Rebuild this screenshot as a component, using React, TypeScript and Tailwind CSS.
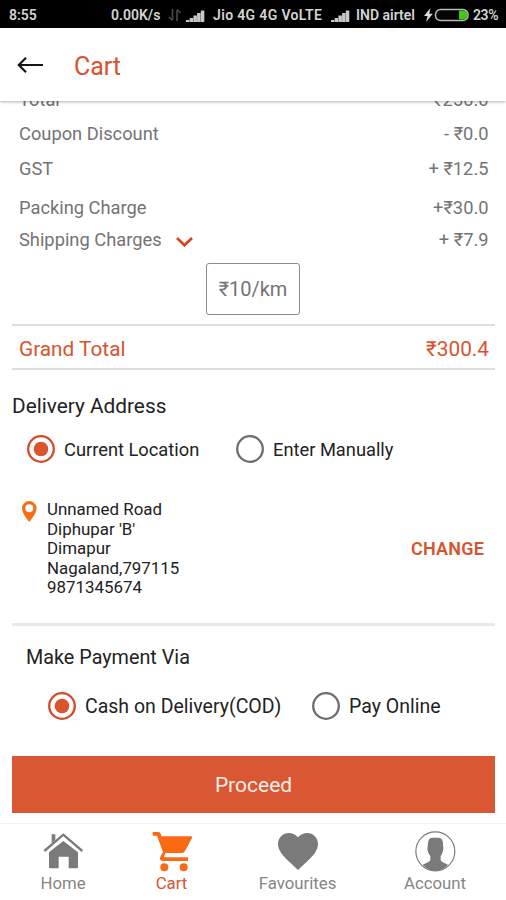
import { useState } from 'react';
import type { ReactNode } from 'react';

function SignalBars({ className }: { className: string }) {
  return (
    <svg className={`h-[13px] w-[19px] ${className}`} viewBox="0 0 19 13" fill="#c9c9c9">
      <rect x="0" y="11" width="3.500" height="2" />
      <rect x="3.700" y="9" width="3.500" height="4" />
      <rect x="7.400" y="6.500" width="3.500" height="6.500" />
      <rect x="11.100" y="4" width="3.500" height="9" />
      <rect x="14.800" y="1.500" width="3.500" height="11.500" />
    </svg>
  );
}

function StatusBar() {
  return (
    <div className="flex h-7 shrink-0 items-center bg-black pt-0.5 text-sm font-semibold whitespace-nowrap text-[#d4d4d4]">
      <span className="ml-[9px] w-[102px]">8:55</span>
      <span className="w-[57px]">0.00K/s</span>
      <svg className="h-3.5 w-[14px]" viewBox="0 0 14 14" fill="none" stroke="#4a4a4a" strokeWidth="1.600">
        <path d="M4.500 1v11M4.500 12.500L1 9M9 13V2M9 1.500L12.500 5" />
      </svg>
      <SignalBars className="ml-1" />
      <span className="ml-[8px] w-[118px] tracking-[0.350px]">Jio 4G 4G VoLTE</span>
      <SignalBars className="" />
      <span className="ml-[6px] w-[68px]">IND airtel</span>
      <svg className="h-3.5 w-[9px]" viewBox="0 0 9 14" fill="#dedede">
        <path d="M6.500 0L0 8h3.600L2 14l6.800-8.200H5.200z" />
      </svg>
      <svg className="ml-[1px] h-[14px] w-[36px]" viewBox="0 0 36 14">
        <rect x="1.500" y="1.500" width="32.500" height="11" rx="5" fill="#050505" stroke="#b9b9b9" strokeWidth="1.500" />
        <path d="M25 2.500h4.500a4 4.500 0 0 1 0 9H25z" fill="#43c516" />
      </svg>
      <span className="ml-[3px] tracking-[-0.4px]">23%</span>
    </div>
  );
}

function Header() {
  return (
    <header className="relative z-10 flex h-[73px] shrink-0 items-center bg-white pt-1 shadow-[0_1px_3px_rgba(0,0,0,0.3)]">
      <svg className="-mt-[3px] ml-[17px] h-[18px] w-[26px]" viewBox="0 0 26 18" fill="none" stroke="#151515" strokeWidth="2.200">
        <path d="M26 9H2M9 1.700L1.800 9L9 16.300" />
      </svg>
      <h1 className="ml-[31px] text-[25px] tracking-[-0.1px] text-[#d9532c]">Cart</h1>
    </header>
  );
}

interface BillRowProps {
  label: string;
  value: string;
  className: string;
  children?: ReactNode;
}

function BillRow({ label, value, className, children }: BillRowProps) {
  return (
    <div className={`flex items-center pr-[17.500px] pl-[19px] text-[18.300px] text-[#747474] ${className}`}>
      <span>{label}</span>
      {children}
      <span className="ml-auto">{value}</span>
    </div>
  );
}

interface RadioProps {
  checked: boolean;
  onSelect: () => void;
  className: string;
  children: ReactNode;
}

function Radio({ checked, onSelect, className, children }: RadioProps) {
  return (
    <button onClick={onSelect} className={`flex items-center gap-[9px] whitespace-nowrap text-[#222] ${className}`}>
      <svg className="size-7 shrink-0" viewBox="0 0 28 28" fill="none">
        <circle cx="14" cy="14" r="12.800" stroke={checked ? '#d6492b' : '#6d6d6d'} strokeWidth="2.300" />
        {checked && <circle cx="14" cy="14" r="7.300" fill="#d9532c" />}
      </svg>
      <span className="pt-0.5 leading-[26px]">{children}</span>
    </button>
  );
}

function NavItem({ label, className, children }: { label: string; className: string; children: ReactNode }) {
  return (
    <button className={`flex flex-col items-center text-[16.800px] ${className}`}>
      <span className="flex h-[55px] items-center">{children}</span>
      <span className="leading-[9px]">{label}</span>
    </button>
  );
}

function BottomNav() {
  return (
    <nav className="mt-[10px] flex h-[77px] shrink-0 border-t border-[#f1f1f1] bg-white">
      <NavItem label="Home" className="w-[126px] text-[#858585]">
        <svg className="h-[38px] w-[41px]" viewBox="0 0 123 114" fill="#7a7a7a">
          <path d="M26 7h11v17L26 34z" />
          <path d="M4 57L61 8l57 49" fill="none" stroke="#7a7a7a" strokeWidth="7" />
          <path d="M18 61L61 27l44 34v44q0 4-4 4H77V74H47v35H22q-4 0-4-4z" />
        </svg>
      </NavItem>
      <NavItem label="Cart" className="w-[91px] text-[#d9532c]">
        <svg className="ml-px size-[41px]" viewBox="0 0 123 123" fill="#fa6a12">
          <path d="M2 3h17q4 0 6 4l4 9h88q5 0 3 5L99 60q-3 6-9 6H41l-5 10q-1 3 2 3h70v11H34q-14-1-9-13l8-14L15 14H2z" />
          <circle cx="37" cy="109" r="12" />
          <circle cx="95" cy="109" r="12" />
        </svg>
      </NavItem>
      <NavItem label="Favourites" className="w-[161px] text-[#858585]">
        <svg className="h-[37px] w-[40px]" viewBox="2 3 20 18.350" preserveAspectRatio="none" fill="#7a7a7a">
          <path d="M12 21.350l-1.450-1.320C5.400 15.360 2 12.280 2 8.500 2 5.420 4.420 3 7.500 3c1.740 0 3.410.81 4.500 2.090C13.090 3.810 14.760 3 16.500 3 19.580 3 22 5.420 22 8.500c0 3.780-3.400 6.860-8.550 11.540L12 21.350z" />
        </svg>
      </NavItem>
      <NavItem label="Account" className="w-[114px] text-[#858585]">
        <svg className="size-[41px]" viewBox="0 0 123 123">
          <circle cx="61" cy="61" r="58.500" fill="none" stroke="#7a7a7a" strokeWidth="3.500" />
          <path
            d="M39 36Q40 20 53 20H69Q83 20 84 36L85 55Q83 68 77 76V88Q82 95 99 101Q84 119 61 119Q38 119 23 101Q40 95 46 88V76Q39 68 37 55z"
            fill="#7a7a7a"
          />
        </svg>
      </NavItem>
    </nav>
  );
}

const address = ['Unnamed Road', "Diphupar 'B'", 'Dimapur', 'Nagaland,797115', '9871345674'];

export default function App() {
  const [location, setLocation] = useState('current');
  const [payment, setPayment] = useState('cod');

  return (
    <div className="flex h-[900px] w-[506px] flex-col overflow-hidden bg-white font-['Roboto','Noto_Sans',sans-serif]">
      <StatusBar />
      <Header />

      <main className="-mt-[19px]">
        <BillRow label="Total" value="₹250.0" className="h-[35px]" />
        <BillRow label="Coupon Discount" value="- ₹0.0" className="h-[34px]" />
        <BillRow label="GST" value="+ ₹12.5" className="h-[35px]" />
        <BillRow label="Packing Charge" value="+₹30.0" className="h-[43px]" />
        <BillRow label="Shipping Charges" value="+ ₹7.9" className="h-[21px]">
          <svg className="mt-[5px] ml-[14px] h-[10px] w-[17px]" viewBox="0 0 17 10" fill="none" stroke="#d6421c" strokeWidth="2.600">
            <path d="M1 1l7.500 7.300L16 1" />
          </svg>
        </BillRow>

        <div className="mx-auto mt-[13px] flex h-[52px] w-[94px] items-center justify-center rounded-[3px] border-[1.500px] border-[#8b8b8b] text-[20px] text-[#747474]">
          ₹10/km
        </div>

        <div className="mt-[9px] mr-[11px] ml-3 flex h-[46px] items-center justify-between border-y-2 border-[#dedede] pt-[4px] pr-[6px] pl-[7px] text-[20.800px] leading-7 text-[#d9532c]">
          <span>Grand Total</span>
          <span>₹300.4</span>
        </div>

        <h2 className="mt-[22px] ml-3 text-[20.800px] leading-7 text-[#222]">Delivery Address</h2>
        <div className="mt-[15px] ml-[27px] flex text-[18.300px]">
          <Radio checked={location === 'current'} onSelect={() => setLocation('current')} className="w-[209px]">
            Current Location
          </Radio>
          <Radio checked={location === 'manual'} onSelect={() => setLocation('manual')} className="">
            Enter Manually
          </Radio>
        </div>

        <div className="mt-[37px] flex pr-[22px] pl-[22px]">
          <svg className="mt-[1px] h-[21px] w-[15px]" viewBox="0 0 15 21" fill="#f86c14">
            <path fillRule="evenodd" d="M7.300 0A7.300 7.300 0 0 0 0 7.300C0 12.600 7.300 21 7.300 21s7.300-8.400 7.300-13.700A7.300 7.300 0 0 0 7.300 0zm0 3.300a4 4 0 1 1 0 8 4 4 0 0 1 0-8z" />
          </svg>
          <address className="ml-[10px] text-[16.900px] leading-[19.600px] text-[#222] not-italic">
            {address.map((line) => (
              <p key={line}>{line}</p>
            ))}
          </address>
          <button className="ml-auto text-lg font-semibold tracking-[0.2px] text-[#d9532c]">CHANGE</button>
        </div>

        <hr className="mt-[25px] mr-[11px] ml-3 border-t-[3px] border-[#e9e9e9]" />

        <h2 className="mt-[18px] ml-[26px] text-[19.800px] leading-[28px] text-[#222]">Make Payment Via</h2>
        <div className="mt-[20px] ml-[48px] flex text-[19.500px]">
          <Radio checked={payment === 'cod'} onSelect={() => setPayment('cod')} className="w-[264px]">
            Cash on Delivery(COD)
          </Radio>
          <Radio checked={payment === 'online'} onSelect={() => setPayment('online')} className="">
            Pay Online
          </Radio>
        </div>

        <button className="mt-9 ml-3 block h-[57px] w-[483px] bg-[#d95733] pt-0.5 text-[21px] text-[#fbeee9]">Proceed</button>
      </main>

      <BottomNav />
    </div>
  );
}
